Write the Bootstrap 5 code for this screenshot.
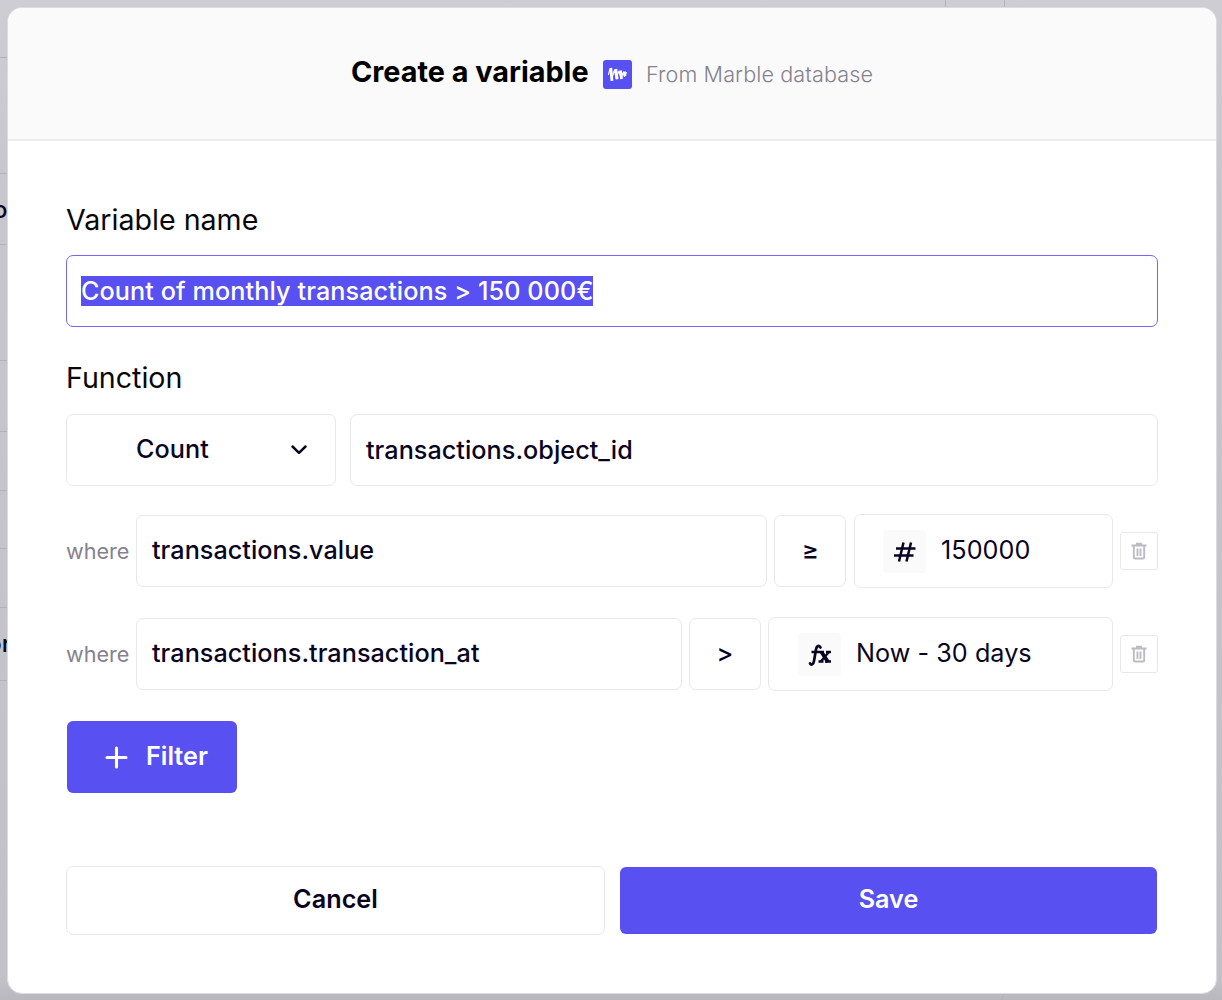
<!DOCTYPE html>
<html lang="en">
<head>
<meta charset="utf-8">
<meta name="viewport" content="width=device-width, initial-scale=1">
<title>Create a variable</title>
<link href="https://cdn.jsdelivr.net/npm/bootstrap@5.3.0/dist/css/bootstrap.min.css" rel="stylesheet">
<style>
  body { font-family: Inter, "Liberation Sans", sans-serif; background: #c6c4cb; color: #080421; width: 1222px; height: 1000px; overflow: hidden; position: relative; }
  .backdrop-page { position: absolute; inset: 0; width: 1222px; height: 1000px; }
  .backdrop-page text { font: 500 24px Inter, sans-serif; fill: #080421; }
  .dialog { position: relative; width: 1210px; height: 987px; margin: 7px 0 0 7px; border: 1px solid #dcdbe0; border-radius: 15px; background: #fff; overflow: hidden; }
  .dialog-top { height: 133px; background: #fafafa; border-bottom: 2px solid #ededee; padding: 0 0 1px 343px; }
  .dialog-title { font-size: 28.8px; font-weight: 700; line-height: 36px; color: #000; width: 238px; margin-top: -3px; }
  .brand { width: 29px; height: 29px; margin: 2px 14px 0; }
  .origin { font-size: 21.6px; color: #85818f; font-weight: 300; margin-top: 3px; letter-spacing: .1px; }
  .dialog-main { padding: 60px 58px 0; }
  .field-label { font-size: 28.6px; line-height: 38px; color: #080808; display: block; }
  .box { border: 1px solid #e8e8ea; border-radius: 7px; height: 72px; background: #fff; color: #080421; font-size: 25.2px; font-weight: 500; white-space: nowrap; display: flex; align-items: center; padding: 0 0 0 15px; letter-spacing: .04px; }
  .box.on { border-color: #7169ef; margin-top: 16px; padding-left: 14px; padding-bottom: 1px; }
  .sel { background: #5850f0; color: #fff; line-height: 30px; letter-spacing: .09px; }
  .fn-label { margin-top: 32px; margin-bottom: 17px; }
  .fn-row { gap: 14px; }
  .fn-row .box { padding-top: 1px; }
  .fn-row .count { width: 270px; padding: 0 0 1px 69px; }
  .chevron { margin-left: 81px; margin-top: 1px; }
  .filter-row { height: 74px; }
  .r1 { margin-top: 28px; }
  .r2 { margin-top: 29px; }
  .where { width: 70px; font-size: 21.6px; color: #85818f; }
  .op { width: 72px; padding: 0; justify-content: center; margin: 0 7px; }
  .r1 .op { margin-right: 8px; padding-left: 1px; }
  .v1 { width: 259px; padding-left: 28px; }
  .v2 { width: 345px; padding-left: 29px; padding-bottom: 1px; }
  .tall { height: 74px; font-weight: 400; }
  .tile { width: 43px; height: 43px; background: #fafafa; border-radius: 4px; margin-right: 15px; margin-top: 1px; }
  .v2 .tile { margin-top: 2px; }
  .bin { width: 38px; height: 38px; border-radius: 3px; padding: 0; margin-left: 7px; justify-content: center; }
  .act, .act:hover { background: #5850f0; color: #fff; font-size: 25.2px; font-weight: 600; border-radius: 6px; border: 0; }
  .add { width: 170px; height: 72px; margin: 30px 0 0 1px; padding: 0 0 0 38px; display: flex; align-items: center; }
  .add svg { margin: 1px 18px 0 0; }
  .foot { margin-top: 73px; gap: 15px; }
  .foot .box { width: 539px; height: 69px; font-weight: 600; padding: 0 0 2px; justify-content: center; }
  .foot .act { width: 537px; height: 67px; padding: 0 0 1px; margin-top: 1px; }
</style>
<script src="https://cdn.jsdelivr.net/npm/bootstrap@5.3.0/dist/js/bootstrap.bundle.min.js"></script>
</head>
<body>
<svg class="backdrop-page" viewBox="0 0 1222 1000">
  <defs><linearGradient id="shade" x1="0" y1="0" x2="0" y2="1"><stop offset="0" stop-color="#cfcdd4"/><stop offset=".2" stop-color="#c8c6cd"/><stop offset=".98" stop-color="#c3c1c8"/><stop offset="1" stop-color="#b9b8bd"/></linearGradient></defs>
  <rect width="1222" height="1000" fill="url(#shade)"/>
  <path d="M0 57.5H8M0 173.5H8M0 244.5H8M0 360.5H8M0 431.5H8M0 490.5H8M0 548.5H8M0 607.5H8M0 680.5H8M945.5 0V8M1004.5 0V8M1004.5 990Q1004 996 1001 1001" stroke="#b3b1b9" fill="none"/>
  <text x="7.5" y="218" text-anchor="end">o</text>
  <text x="11" y="652" text-anchor="end">or</text>
</svg>
<main class="dialog">
  <header class="dialog-top d-flex align-items-center">
    <h1 class="dialog-title text-nowrap mb-0">Create a variable</h1>
    <svg class="brand" viewBox="0 0 29 29"><rect width="29" height="29" rx="3" fill="#5850f0"/><path d="M5.500 14.500L7 9L8.500 19.500L11.500 10L13 18.500L16 11L18 18L20.500 12L21.500 16.500L23.500 12.500" fill="none" stroke="#fff" stroke-width="1.100" stroke-linejoin="round" stroke-linecap="round"/><path d="M7.800 8L9 20.800M12.800 9L14.200 19.300M17.500 10.500L18.600 19M21.300 11.500L22 16" stroke="#fff" stroke-width="2.800"/></svg>
    <span class="origin text-nowrap">From Marble database</span>
  </header>
  <section class="dialog-main">
    <label class="field-label">Variable name</label>
    <div class="box on"><span class="sel">Count of monthly transactions &gt; 150 000€</span></div>
    <label class="field-label fn-label">Function</label>
    <div class="fn-row d-flex">
      <div class="box count"><span>Count</span><svg class="chevron" width="18" height="12" viewBox="0 0 18 12"><path d="M2.500 2.500L9 8.800L15.500 2.500" fill="none" stroke="#080421" stroke-width="2.500" stroke-linecap="round" stroke-linejoin="round"/></svg></div>
      <div class="box flex-grow-1">transactions.object_id</div>
    </div>
    <div class="filter-row r1 d-flex align-items-center">
      <span class="where">where</span>
      <div class="box flex-grow-1">transactions.value</div>
      <div class="box op">≥</div>
      <div class="box tall v1">
        <span class="tile d-flex align-items-center justify-content-center"><svg width="24" height="24" viewBox="0 0 24 24"><path d="M3 8.500H22.500M1 15.500H20.500M10.500 2.500L6 21.500M18 2.500L13.500 21.500" fill="none" stroke="#080421" stroke-width="2.500"/></svg></span>150000
      </div>
      <div class="box bin"><svg width="18" height="20" viewBox="0 0 18 20"><path d="M1.500 4.500H16.500M6 2.800H12M3.800 5V16.500Q3.800 17.500 5 17.500H13Q14.200 17.500 14.200 16.500V5M7.500 7.500V15M10.500 7.500V15" fill="none" stroke="#bcbbc3" stroke-width="1.900"/></svg></div>
    </div>
    <div class="filter-row r2 d-flex align-items-center">
      <span class="where">where</span>
      <div class="box flex-grow-1">transactions.transaction_at</div>
      <div class="box op">&gt;</div>
      <div class="box tall v2">
        <span class="tile d-flex align-items-center justify-content-center"><svg width="24" height="24" viewBox="0 0 24 24"><g fill="none" stroke="#080421"><path d="M12.500 4.500C10.500 1.500 8.500 3.500 8 6.500L6 18C5.500 21.500 3 22.500 2 20.500" stroke-width="2.700" stroke-linecap="round"/><path d="M3.500 9H16M18 9H23M10.500 18.500H15.500M17 18.500H23" stroke-width="2.400"/><path d="M13.500 9L20 19" stroke-width="3.800"/><path d="M20.500 9.500L12.800 18.500" stroke-width="2.200"/></g></svg></span>Now - 30 days
      </div>
      <div class="box bin"><svg width="18" height="20" viewBox="0 0 18 20"><path d="M1.500 4.500H16.500M6 2.800H12M3.800 5V16.500Q3.800 17.500 5 17.500H13Q14.200 17.500 14.200 16.500V5M7.500 7.500V15M10.500 7.500V15" fill="none" stroke="#bcbbc3" stroke-width="1.900"/></svg></div>
    </div>
    <button class="btn act add"><svg width="23" height="23" viewBox="0 0 23 23"><path d="M11.500 2V21M2 11.500H21" stroke="#fff" stroke-width="3.100" stroke-linecap="round"/></svg>Filter</button>
    <div class="foot d-flex">
      <button class="box">Cancel</button>
      <button class="btn act">Save</button>
    </div>
  </section>
</main>
</body>
</html>
